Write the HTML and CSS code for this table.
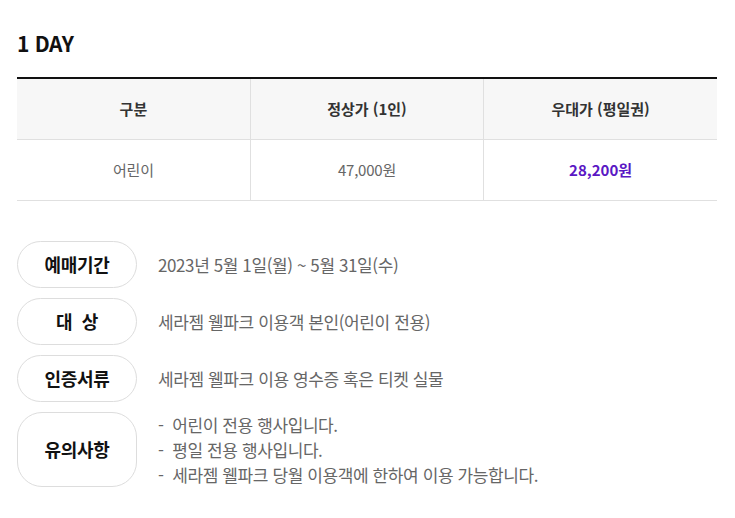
FILE: index.html
```html
<!DOCTYPE html>
<html lang="ko">
<head>
<meta charset="utf-8">
<link rel="stylesheet" href="styles.css">
</head>
<body>
<div class="wrap">
  <h2 class="title">1 DAY</h2>
  <table class="price">
    <thead>
      <tr><th>구분</th><th>정상가 (1인)</th><th>우대가 (평일권)</th></tr>
    </thead>
    <tbody>
      <tr><td>어린이</td><td>47,000원</td><td class="sale">28,200원</td></tr>
    </tbody>
  </table>
  <ul class="info">
    <li class="row"><span class="label">예매기간</span><div class="text">2023년 5월 1일(월) ~ 5월 31일(수)</div></li>
    <li class="row"><span class="label">대&nbsp;&nbsp;상</span><div class="text">세라젬 웰파크 이용객 본인(어린이 전용)</div></li>
    <li class="row"><span class="label">인증서류</span><div class="text">세라젬 웰파크 이용 영수증 혹은 티켓 실물</div></li>
    <li class="row"><span class="label tall">유의사항</span><div class="text notes"><p>-&nbsp; 어린이 전용 행사입니다.</p><p>-&nbsp; 평일 전용 행사입니다.</p><p>-&nbsp; 세라젬 웰파크 당월 이용객에 한하여 이용 가능합니다.</p></div></li>
  </ul>
</div>
</body>
</html>
```

FILE: styles.css
```css
* { box-sizing: border-box; }
body {
  margin: 0;
  background: #fff;
  font-family: "Noto Sans CJK KR", "Noto Sans", sans-serif;
  color: #333;
}
.wrap {
  width: 700px;
  margin-left: 17px;
  padding-top: 29px;
}
.title {
  margin: 0;
  font-size: 21px;
  line-height: 28px;
  font-weight: 700;
  color: #111;
  letter-spacing: -0.3px;
}
.price {
  margin-top: 20px;
  width: 700px;
  border-collapse: collapse;
  table-layout: fixed;
  border-top: 2px solid #111;
}
.price th, .price td {
  text-align: center;
  font-size: 15px;
  border-bottom: 1px solid #e0e0e0;
  border-left: 1px solid #e0e0e0;
}
.price th:first-child, .price td:first-child { border-left: 0; }
.price th {
  height: 61px;
  background: #f7f7f7;
  font-weight: 700;
  color: #333;
}
.price td {
  height: 61px;
  color: #666;
  font-weight: 400;
  letter-spacing: -0.2px;
}
.price td.sale {
  color: #5a17c4;
  font-weight: 700;
  letter-spacing: 0;
}
.info {
  list-style: none;
  margin: 40px 0 0;
  padding: 0;
  display: flex;
  flex-direction: column;
  gap: 10px;
}
.row {
  display: flex;
  align-items: center;
  gap: 21px;
}
.label {
  flex: none;
  width: 120px;
  height: 47px;
  border: 1px solid #ddd;
  border-radius: 24px;
  display: flex;
  align-items: center;
  justify-content: center;
  font-size: 18px;
  font-weight: 700;
  color: #111;
  letter-spacing: -0.3px;
}
.label.tall {
  height: 75px;
  border-radius: 25px;
}
.text {
  font-size: 17px;
  color: #666;
  font-weight: 400;
  letter-spacing: -0.4px;
}
.notes p {
  margin: 0;
  line-height: 25px;
}
```
